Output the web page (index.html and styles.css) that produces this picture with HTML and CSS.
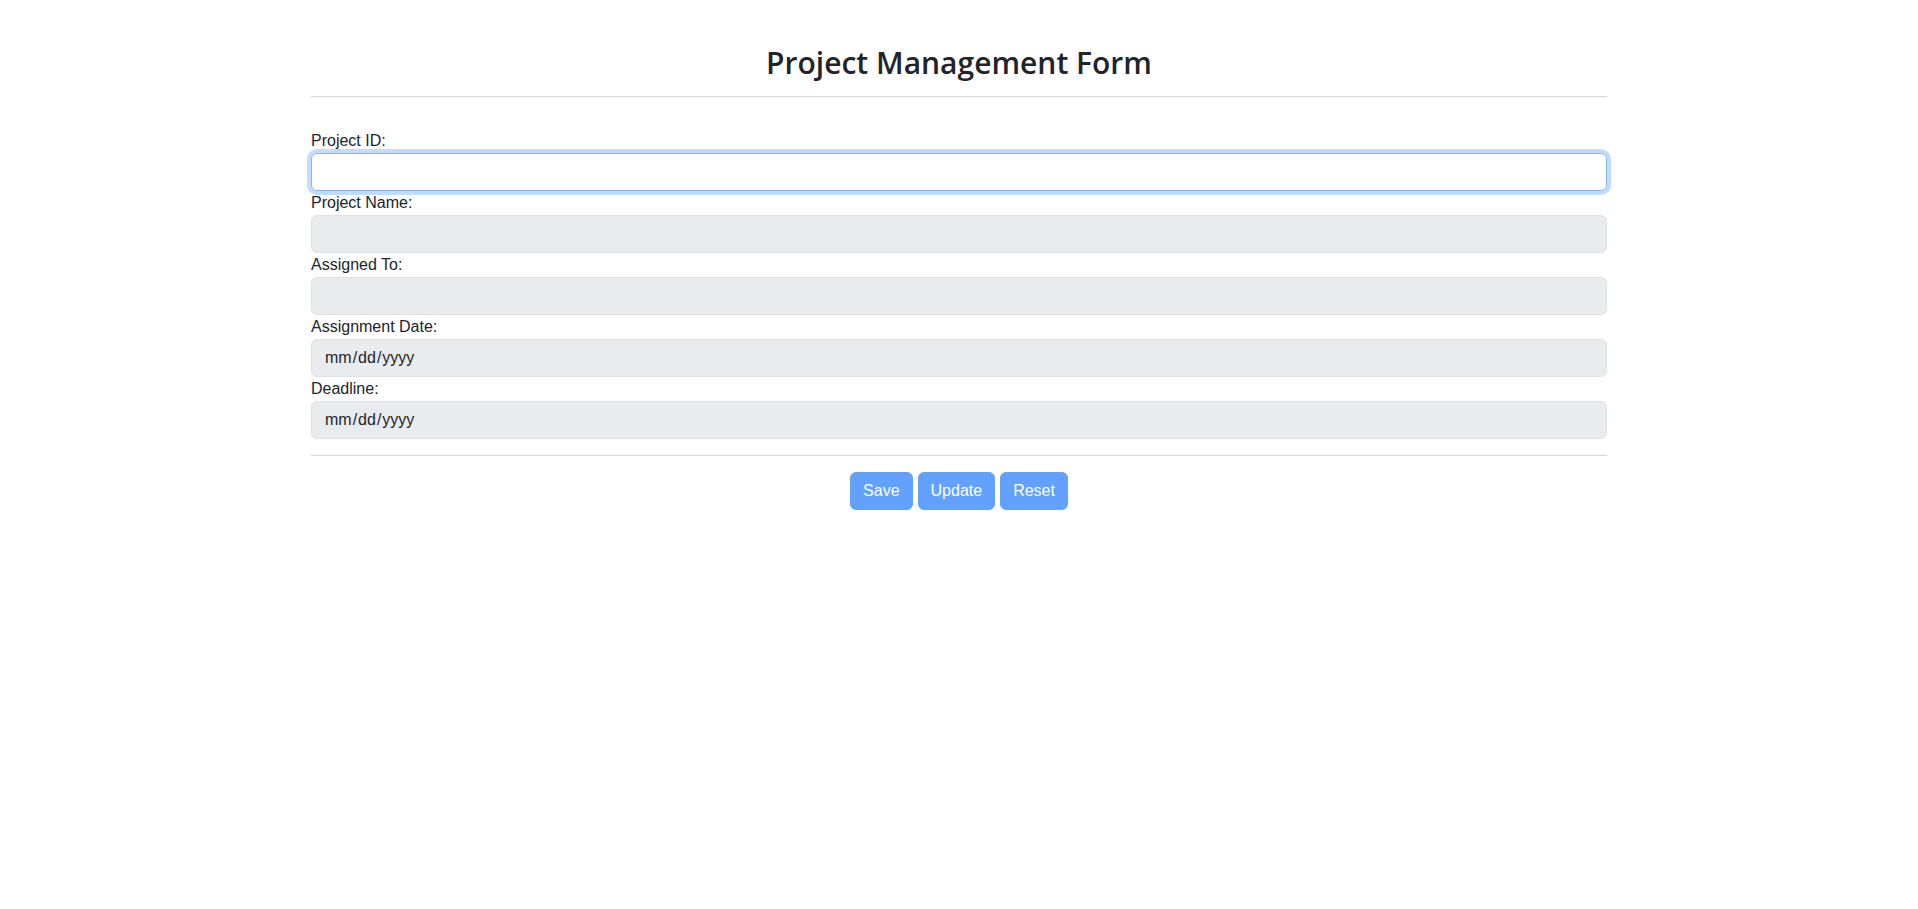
FILE: index.html
```html
<!DOCTYPE html>
<html lang="en">
<head>
<meta charset="utf-8">
<title>Project Management Form</title>
<link rel="stylesheet" href="styles.css">
</head>
<body>
<div class="container">
  <h2 class="title">Project Management Form</h2>
  <hr class="rule">
  <form class="form">
    <div class="field">
      <label class="label" for="pid">Project ID:</label>
      <input class="control control-focus" id="pid" type="text">
    </div>
    <div class="field">
      <label class="label" for="pname">Project Name:</label>
      <input class="control" id="pname" type="text" disabled>
    </div>
    <div class="field">
      <label class="label" for="assigned">Assigned To:</label>
      <input class="control" id="assigned" type="text" disabled>
    </div>
    <div class="field">
      <label class="label" for="adate">Assignment Date:</label>
      <input class="control" id="adate" type="date" disabled>
    </div>
    <div class="field">
      <label class="label" for="deadline">Deadline:</label>
      <input class="control" id="deadline" type="date" disabled>
    </div>
  </form>
  <hr class="rule rule-bottom">
  <div class="actions">
    <button class="btn" type="button" disabled>Save</button>
    <button class="btn" type="button" disabled>Update</button>
    <button class="btn" type="button" disabled>Reset</button>
  </div>
</div>
</body>
</html>
```

FILE: styles.css
```css
* {
  box-sizing: border-box;
}

body {
  margin: 0;
  font-family: "Liberation Sans", Arial, sans-serif;
  font-size: 16px;
  line-height: 1.5;
  color: #212529;
  background: #fff;
}

.container {
  max-width: 1320px;
  margin: 0 auto;
  padding: 0 12px;
}

.title {
  margin: 44px 0 0;
  font-family: "Open Sans", "Liberation Sans", sans-serif;
  font-size: 30px;
  font-weight: 600;
  line-height: 38px;
  text-align: center;
  color: #212529;
}

.rule {
  margin: 14px 0 0;
  border: 0;
  border-top: 1px solid #d3d4d5;
  height: 0;
}

.rule-bottom {
  margin: 16px 0 16px;
}

.form {
  margin-top: 32px;
}

.field {
  display: flex;
  flex-direction: column;
}

.label {
  display: block;
  line-height: 24px;
  font-size: 16px;
  color: #212529;
}

.control {
  display: block;
  width: 100%;
  height: 38px;
  padding: 6px 12px;
  font-family: inherit;
  font-size: 16px;
  line-height: 1.5;
  color: #212529;
  background: #fff;
  border: 1px solid #dee2e6;
  border-radius: 6px;
  outline: none;
}

.control:disabled {
  background: #e9ecef;
  color: #212529;
  opacity: 1;
}

.control::-webkit-calendar-picker-indicator {
  display: none;
}

.control-focus {
  border-color: #86b7fe;
  box-shadow: 0 0 0 4px rgba(13, 110, 253, 0.25);
}

.actions {
  display: flex;
  justify-content: center;
  gap: 5px;
}

.btn {
  height: 38px;
  padding: 6px 12px;
  font-family: inherit;
  font-size: 16px;
  line-height: 1.5;
  color: #fff;
  background: #62a2fe;
  border: 1px solid #62a2fe;
  border-radius: 6px;
}
```
